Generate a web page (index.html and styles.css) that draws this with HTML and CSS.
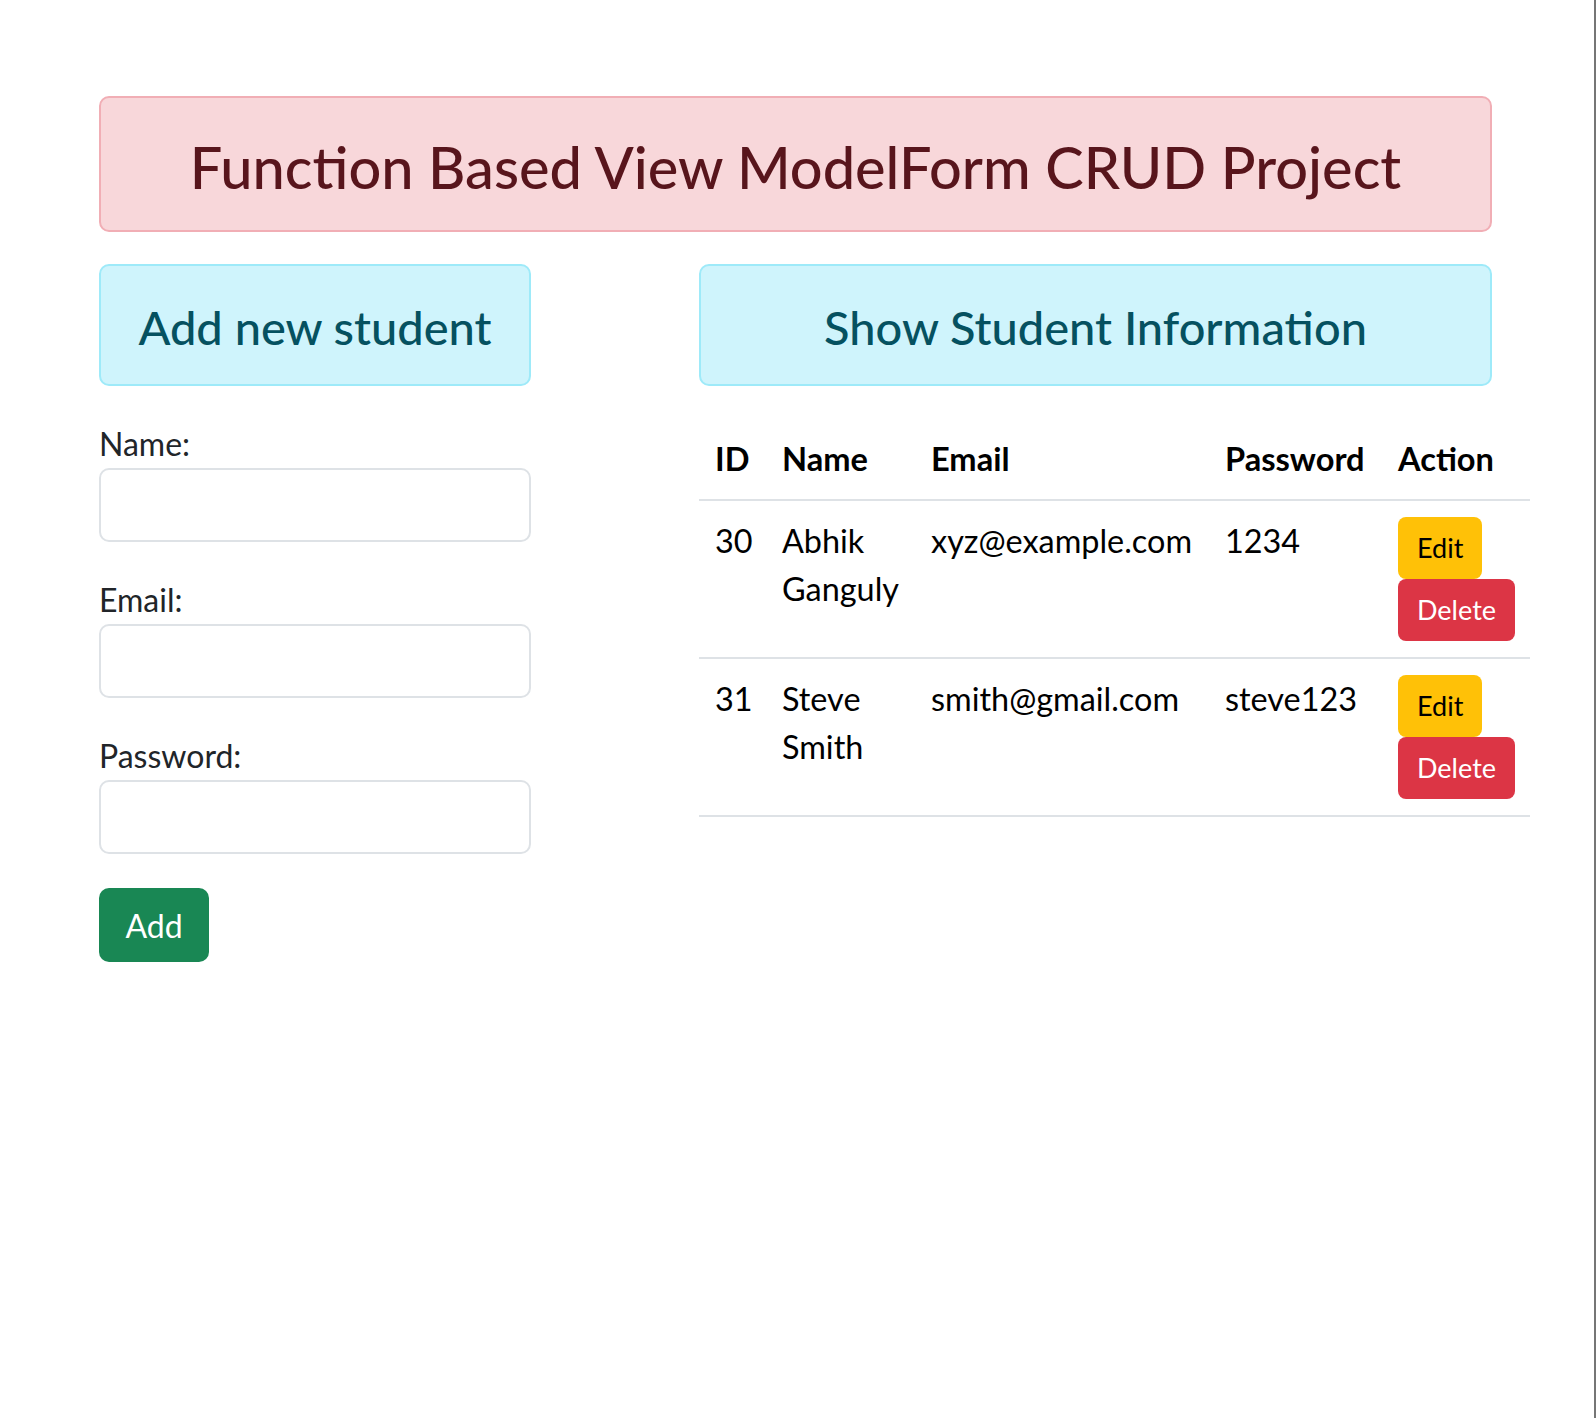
FILE: index.html
```html
<!DOCTYPE html>
<html lang="en">
<head>
<meta charset="utf-8">
<title>Function Based View ModelForm CRUD Project</title>
<link rel="stylesheet" href="styles.css">
</head>
<body>
<div class="frame">
  <div class="container">
    <div class="alert alert-danger">Function Based View ModelForm CRUD Project</div>
    <div class="row">
      <div class="col-left">
        <div class="alert-info">Add new student</div>
        <form class="student-form">
          <label class="form-label" for="name">Name:</label>
          <input class="form-control" id="name" type="text">
          <label class="form-label" for="email">Email:</label>
          <input class="form-control" id="email" type="email">
          <label class="form-label" for="password">Password:</label>
          <input class="form-control" id="password" type="password">
          <button class="btn btn-add" type="button">Add</button>
        </form>
      </div>
      <div class="col-right">
        <div class="alert-info">Show Student Information</div>
        <table class="table">
          <colgroup>
            <col class="c-id"><col class="c-name"><col class="c-email"><col class="c-pass"><col class="c-act">
          </colgroup>
          <thead>
            <tr><th>ID</th><th>Name</th><th>Email</th><th>Password</th><th>Action</th></tr>
          </thead>
          <tbody>
            <tr>
              <td>30</td><td>Abhik Ganguly</td><td>xyz@example.com</td><td>1234</td>
              <td><div class="actions"><a class="btn btn-edit">Edit</a><a class="btn btn-delete">Delete</a></div></td>
            </tr>
            <tr>
              <td>31</td><td>Steve Smith</td><td>smith@gmail.com</td><td>steve123</td>
              <td><div class="actions"><a class="btn btn-edit">Edit</a><a class="btn btn-delete">Delete</a></div></td>
            </tr>
          </tbody>
        </table>
      </div>
    </div>
  </div>
</div>
</body>
</html>
```

FILE: styles.css
```css
html, body {
  margin: 0;
  padding: 0;
  background: #ffffff;
}
body {
  font-family: Lato, "Noto Sans", sans-serif;
  font-size: 32px;
  line-height: 1.5;
  color: #212529;
}
.frame {
  box-sizing: border-box;
  min-height: 100vh;
  border-right: 2px solid #767676;
}
.container {
  width: 1393px;
  padding: 96px 0 0 99px;
}
.alert {
  box-sizing: border-box;
  height: 136px;
  padding-top: 6px;
  display: flex;
  align-items: center;
  justify-content: center;
  border-radius: 10px;
  font-size: 57.7px;
  line-height: 1.2;
  font-weight: 500;
}
.alert-danger {
  background: #f8d7da;
  border: 2px solid #f1aeb5;
  color: #58151c;
}
.row {
  display: flex;
  margin-top: 32px;
}
.col-left {
  width: 432px;
}
.col-right {
  width: 793px;
  margin-left: 168px;
}
.alert-info {
  box-sizing: border-box;
  height: 122px;
  padding-top: 4px;
  display: flex;
  align-items: center;
  justify-content: center;
  background: #cff4fc;
  border: 2px solid #9eeaf9;
  color: #055160;
  border-radius: 10px;
  font-size: 47px;
  line-height: 1.2;
  font-weight: 500;
}
.student-form {
  display: flex;
  flex-direction: column;
  align-items: flex-start;
  margin-top: 34px;
}
.form-label {
  display: block;
  line-height: 48px;
}
.form-control {
  box-sizing: border-box;
  width: 432px;
  height: 74px;
  margin: 0 0 34px 0;
  border: 2px solid #dee2e6;
  border-radius: 10px;
  background: #fff;
  font: inherit;
  padding: 0 24px;
}
.btn {
  box-sizing: border-box;
  display: inline-flex;
  align-items: center;
  justify-content: center;
  border: 0;
  font-family: inherit;
}
.btn-add {
  width: 110px;
  height: 74px;
  border-radius: 10px;
  background: #198754;
  color: #fff;
  font-size: 32px;
}
.table {
  width: 831px;
  margin-top: 33px;
  border-collapse: collapse;
  table-layout: fixed;
  color: #000;
}
.c-id { width: 67px; }
.c-name { width: 149px; }
.c-email { width: 294px; }
.c-pass { width: 173px; }
.c-act { width: 148px; }
.table th, .table td {
  padding: 16px;
  text-align: left;
  vertical-align: top;
  line-height: 48px;
  border-bottom: 2px solid #dee2e6;
}
.table td {
  font-size: 32.4px;
}
.table th {
  font-weight: 700;
  font-size: 32.6px;
}
.actions {
  display: flex;
  flex-direction: column;
  align-items: flex-start;
}
.btn-edit, .btn-delete {
  height: 62px;
  padding: 0 19px;
  border-radius: 8px;
  font-size: 27px;
}
.btn-edit {
  background: #ffc107;
  color: #000;
}
.btn-delete {
  background: #dc3545;
  color: #fff;
}
```
